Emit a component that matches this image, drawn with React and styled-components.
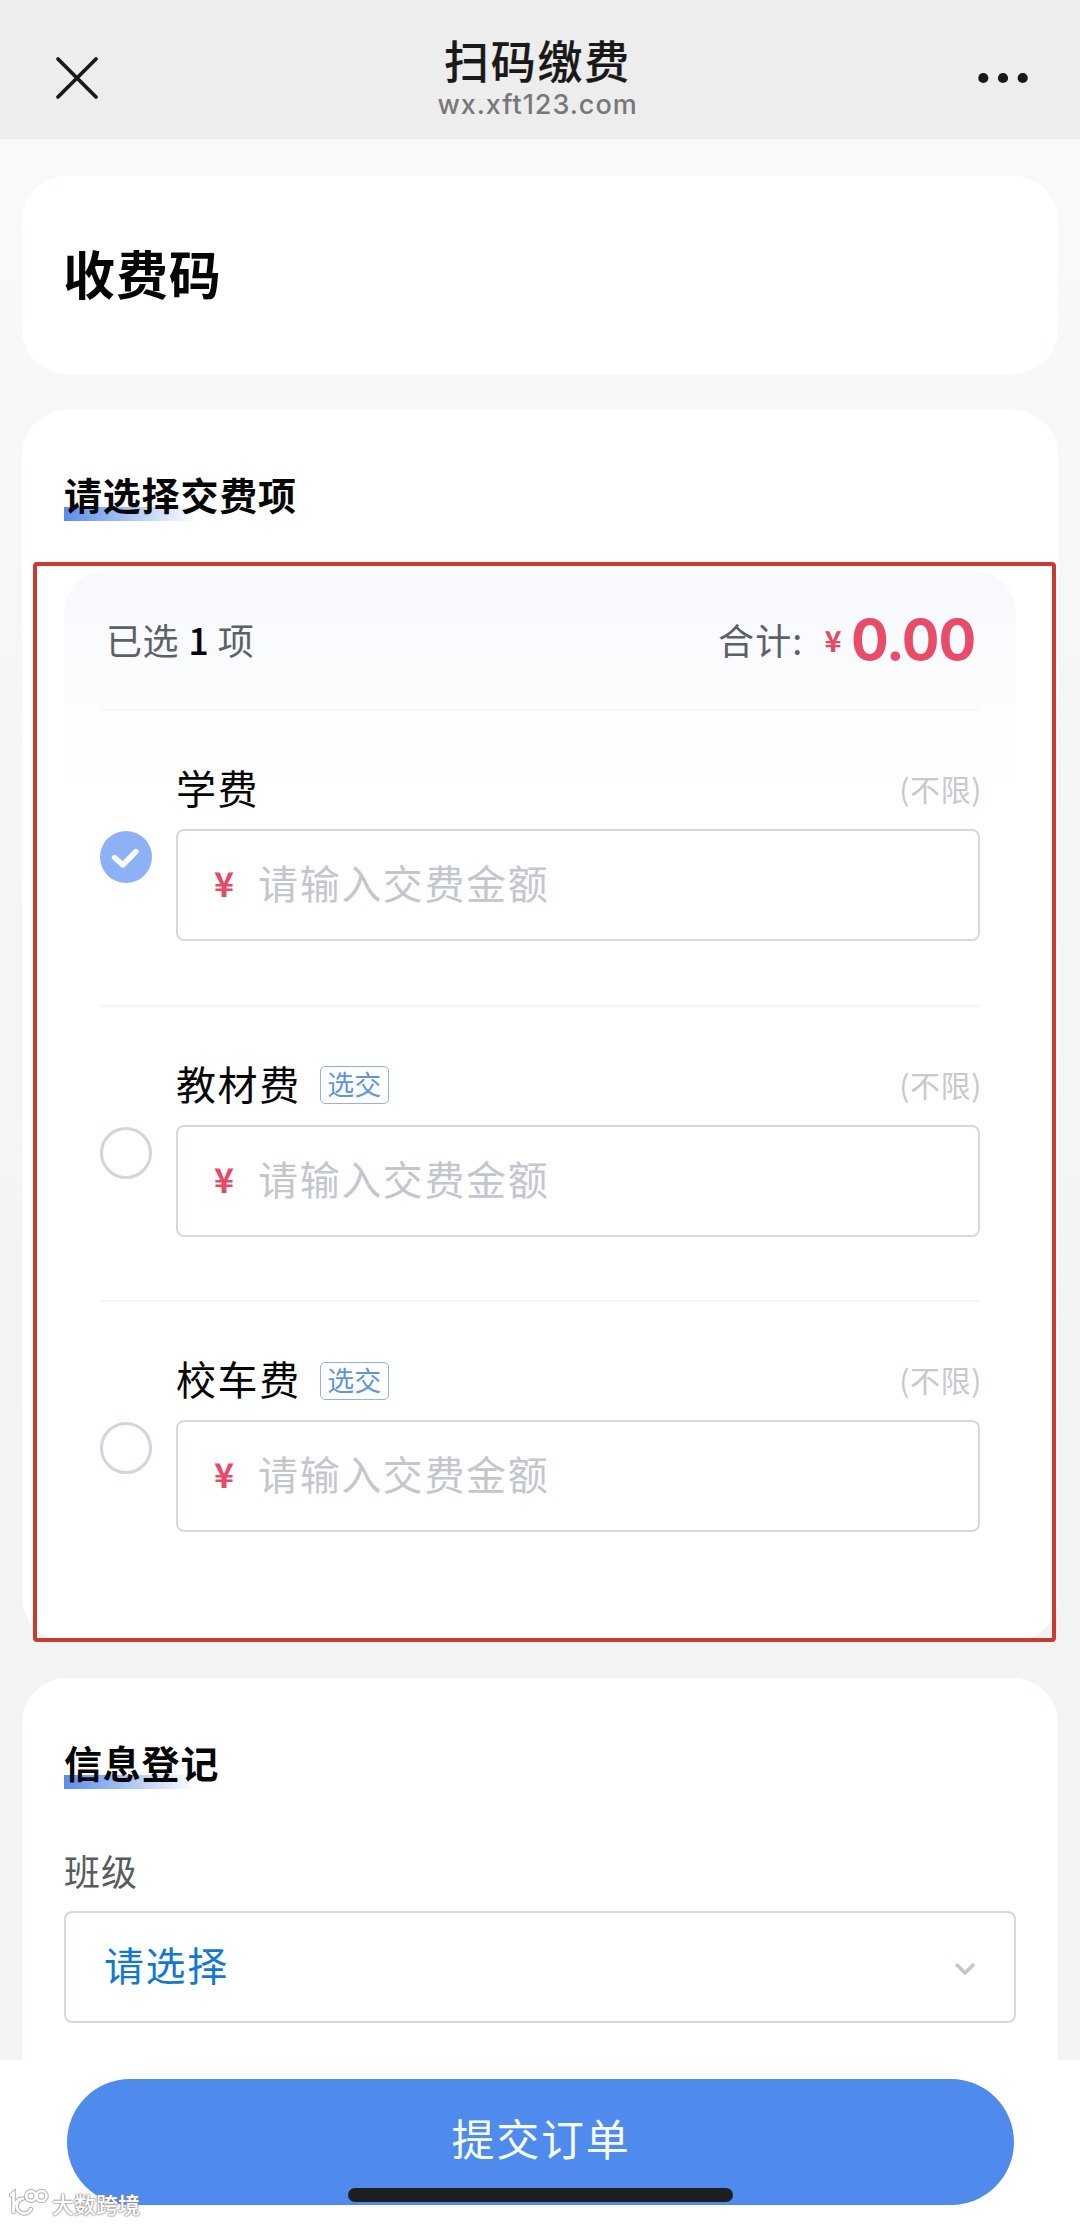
import React, { useState } from 'react'
import styled, { createGlobalStyle } from 'styled-components'

const GlobalStyle = createGlobalStyle`
  * {
    box-sizing: border-box;
  }

  body {
    margin: 0;
    font-family: 'Noto Sans CJK SC', sans-serif;
    color: #060607;
  }
`

const feeItems = [
  { id: 'tuition', name: '学费', optional: false },
  { id: 'books', name: '教材费', optional: true },
  { id: 'bus', name: '校车费', optional: true },
]

const CloseIcon = () => (
  <svg width="44" height="44" viewBox="0 0 44 44" fill="none">
    <path d="M3 3L41 41M41 3L3 41" stroke="#191919" strokeWidth="3.8" strokeLinecap="round" />
  </svg>
)

const MoreIcon = () => (
  <svg width="52" height="12" viewBox="0 0 52 12" fill="#191919">
    <circle cx="6.3" cy="6" r="5.1" />
    <circle cx="26" cy="6" r="5.1" />
    <circle cx="45.7" cy="6" r="5.1" />
  </svg>
)

const CheckIcon = () => (
  <svg width="52" height="52" viewBox="0 0 52 52" fill="none">
    <path
      d="M14.5 26.5L22.8 34L36 20.5"
      stroke="#fbfdff"
      strokeWidth="5.4"
      strokeLinecap="round"
      strokeLinejoin="round"
    />
  </svg>
)

const ChevronIcon = () => (
  <svg width="22" height="16" viewBox="0 0 22 16" fill="none">
    <path d="M2 3L11 12L20 3" stroke="#c3c7ca" strokeWidth="3.4" />
  </svg>
)

const WatermarkLogo = () => (
  <svg width="40" height="30" viewBox="0 0 40 30" fill="none">
    {['#b3b3b3', '#ffffff'].map((color, i) => (
      <g key={color} stroke={color} strokeWidth={i ? 2.6 : 4.6} strokeLinecap="round">
        <path d="M2 7L4.5 5V24M10.5 11L4.5 17" />
        <path d="M14 10.5A7.5 7.5 0 1 0 22 21" />
        <circle cx="22" cy="8" r="4.8" />
        <circle cx="32.5" cy="8" r="5" />
      </g>
    ))}
  </svg>
)

function FeeItem({ name, optional, checked, onToggle }) {
  return (
    <S.Item>
      <S.Radio $checked={checked} onClick={onToggle}>
        {checked && <CheckIcon />}
      </S.Radio>
      <S.ItemMain>
        <S.ItemHead>
          <S.ItemName>{name}</S.ItemName>
          {optional && <S.Tag>选交</S.Tag>}
          <S.Limit>(不限)</S.Limit>
        </S.ItemHead>
        <S.Field $inset="36px">
          <S.Yen $size="34px">¥</S.Yen>
          <S.Placeholder>请输入交费金额</S.Placeholder>
        </S.Field>
      </S.ItemMain>
    </S.Item>
  )
}

export default function App() {
  const [selected, setSelected] = useState(['tuition'])

  const toggle = (id) =>
    setSelected((ids) => (ids.includes(id) ? ids.filter((i) => i !== id) : [...ids, id]))

  return (
    <S.Page>
      <GlobalStyle />
      <S.Header>
        <CloseIcon />
        <S.Heading>
          <S.Title>扫码缴费</S.Title>
          <S.Host>wx.xft123.com</S.Host>
        </S.Heading>
        <MoreIcon />
      </S.Header>

      <S.Content>
        <S.NameCard>收费码</S.NameCard>

        <S.Card>
          <S.SectionTitle>请选择交费项</S.SectionTitle>
          <S.Panel>
            <S.Summary>
              <span>
                已选 <S.Count>{selected.length}</S.Count> 项
              </span>
              <S.Total>
                <S.TotalLabel>合计:</S.TotalLabel>
                <S.Yen $size="29px">¥</S.Yen>
                <S.Amount>0.00</S.Amount>
              </S.Total>
            </S.Summary>
            {feeItems.map((item) => (
              <FeeItem
                key={item.id}
                name={item.name}
                optional={item.optional}
                checked={selected.includes(item.id)}
                onToggle={() => toggle(item.id)}
              />
            ))}
          </S.Panel>
          <S.Highlight />
        </S.Card>

        <S.Card $last>
          <S.SectionTitle>信息登记</S.SectionTitle>
          <S.Label>班级</S.Label>
          <S.Field $inset="38px">
            <S.SelectText>请选择</S.SelectText>
            <S.Arrow>
              <ChevronIcon />
            </S.Arrow>
          </S.Field>
        </S.Card>
      </S.Content>

      <S.Footer>
        <S.Submit>提交订单</S.Submit>
        <S.HomeIndicator />
        <S.Watermark>
          <WatermarkLogo />
          大数跨境
        </S.Watermark>
      </S.Footer>
    </S.Page>
  )
}

const S = {
  Page: styled.div`
    display: flex;
    flex-direction: column;
    width: 1080px;
    height: 2224px;
    overflow: hidden;
    background: linear-gradient(#f8faf9 138px, #f5f7f7 700px, #f1f4f3 1500px);
  `,

  Header: styled.header`
    display: flex;
    flex-shrink: 0;
    align-items: center;
    justify-content: space-between;
    height: 139px;
    padding: 17px 51px 0 55px;
    background: #ededed;
    border-bottom: 1px solid #e9e9e9;
  `,

  Heading: styled.div`
    display: flex;
    flex-direction: column;
    align-items: center;
    gap: 8px;
    margin: 0 0 0 -1px;
  `,

  Title: styled.h1`
    margin: 0;
    font-size: 45px;
    font-weight: 500;
    line-height: 46px;
    letter-spacing: 1.8px;
    color: #191919;
    -webkit-text-stroke: 0.2px #191919;
  `,

  Host: styled.div`
    font-family: Inter, sans-serif;
    font-size: 27px;
    font-weight: 500;
    line-height: 28px;
    letter-spacing: 0.95px;
    color: #777;
  `,

  Content: styled.main`
    display: flex;
    flex: 1;
    flex-direction: column;
    gap: 36px;
    min-height: 0;
    padding: 37px 22px 0;
    overflow: hidden;
  `,

  NameCard: styled.section`
    display: flex;
    flex-shrink: 0;
    align-items: center;
    height: 198px;
    padding: 0 41px 5px;
    font-size: 52px;
    font-weight: 700;
    line-height: 52px;
    letter-spacing: 0.9px;
    border-radius: 45px;
    background: #fff;
  `,

  // the last card runs on below the footer
  Card: styled.section`
    position: relative;
    flex-shrink: 0;
    padding: 64px 42px ${(p) => (p.$last ? '120px' : '46px')};
    border-radius: 45px;
    background: #fff;
  `,

  SectionTitle: styled.h2`
    margin: 0;
    padding-bottom: 7px;
    font-size: 38px;
    font-weight: 700;
    line-height: 40px;
    letter-spacing: 0.8px;
    background: linear-gradient(to right, #5a8de9, #fff) left bottom / 132px 14px no-repeat;
  `,

  Panel: styled.div`
    margin-top: 51px;
    padding: 0 36px;
    border-radius: 40px 40px 0 0;
    background: linear-gradient(#f7f9fd, #fff 240px);
  `,

  Summary: styled.div`
    display: flex;
    align-items: center;
    justify-content: space-between;
    height: 137px;
    padding: 0 5px 4px 6px;
    font-size: 36px;
    line-height: 36px;
    letter-spacing: 0.4px;
    color: #5c6067;
  `,

  Count: styled.b`
    margin: 0 0 0 1px;
    font-weight: 500;
    color: #060607;
  `,

  Total: styled.div`
    display: flex;
    align-items: center;
  `,

  TotalLabel: styled.span`
    margin-right: 21px;
    letter-spacing: 1.2px;
  `,

  Yen: styled.span`
    padding-top: 2px;
    font-size: ${(p) => p.$size};
    font-weight: 700;
    line-height: 1;
    color: #e54a68;
  `,

  Amount: styled.span`
    margin-left: 9px;
    padding-top: 2px;
    font-family: Inter, sans-serif;
    font-size: 56px;
    font-weight: 700;
    line-height: 56px;
    letter-spacing: -1.2px;
    color: #e94c69;
  `,

  Item: styled.div`
    display: flex;
    gap: 24px;
    height: 295.5px;
    padding-top: 48px;
    border-top: 2px solid #f5f6f7;
  `,

  Radio: styled.div`
    display: flex;
    flex-shrink: 0;
    align-items: center;
    justify-content: center;
    width: 52px;
    height: 52px;
    margin-top: 72px;
    border: ${(p) => (p.$checked ? 'none' : '3px solid #d1d5df')};
    border-radius: 50%;
    background: ${(p) => (p.$checked ? '#8cb1f4' : 'transparent')};
  `,

  ItemMain: styled.div`
    flex: 1;
  `,

  ItemHead: styled.div`
    display: flex;
    align-items: center;
    height: 56px;
    margin-bottom: 14px;
  `,

  ItemName: styled.div`
    font-size: 40px;
    line-height: 40px;
    letter-spacing: 1.6px;
  `,

  Tag: styled.div`
    display: flex;
    align-items: center;
    justify-content: center;
    width: 69px;
    height: 38px;
    margin: 5px 0 0 19px;
    padding-bottom: 3px;
    font-size: 27px;
    line-height: 27px;
    border: 1.5px solid #93b3d8;
    border-radius: 5px;
    color: #5f96da;
  `,

  Limit: styled.div`
    margin-left: auto;
    margin-right: -2px;
    padding-top: 2px;
    font-size: 30px;
    line-height: 30px;
    letter-spacing: 0.6px;
    color: #c7c9cd;
  `,

  Field: styled.div`
    display: flex;
    align-items: center;
    height: 112px;
    padding: 0 ${(p) => p.$inset} 6px;
    border: 2px solid #d6d8db;
    border-radius: 8px;
  `,

  Placeholder: styled.span`
    margin-left: 24px;
    font-size: 40px;
    line-height: 40px;
    letter-spacing: 1.6px;
    color: #c3c7cd;
  `,

  SelectText: styled.span`
    flex: 1;
    font-size: 40px;
    line-height: 40px;
    letter-spacing: 1.6px;
    color: #1677d2;
  `,

  Arrow: styled.span`
    display: flex;
    padding-top: 10px;
  `,

  Label: styled.div`
    margin: 63px 0 23px;
    font-size: 36px;
    line-height: 36px;
    letter-spacing: 1px;
    color: #585b60;
  `,

  // red frame drawn over the card around the fee list
  Highlight: styled.div`
    position: absolute;
    top: 152px;
    left: 11px;
    width: 1023px;
    height: 1080px;
    border: 4px solid #cb3a30;
    border-radius: 4px;
    pointer-events: none;
  `,

  Footer: styled.footer`
    position: relative;
    flex-shrink: 0;
    height: 164px;
    padding: 19px 66px 0 67px;
    background: #fff;
  `,

  Submit: styled.div`
    display: flex;
    align-items: center;
    justify-content: center;
    height: 126px;
    padding: 0 0 9px 1px;
    font-size: 43px;
    line-height: 43px;
    letter-spacing: 1.7px;
    border-radius: 63px;
    background: #4f8bed;
    color: #f6fdff;
  `,

  HomeIndicator: styled.div`
    position: absolute;
    bottom: 22px;
    left: 348px;
    width: 385px;
    height: 14px;
    border-radius: 7px;
    background: #1d1f22;
  `,

  Watermark: styled.div`
    position: absolute;
    bottom: 6px;
    left: 9px;
    display: flex;
    align-items: center;
    gap: 3px;
    font-size: 22px;
    font-weight: 500;
    line-height: 30px;
    color: #fff;
    text-shadow: 0 0 2px #888, 0 0 2px #888, 0 0 1px #999;
  `,
}
